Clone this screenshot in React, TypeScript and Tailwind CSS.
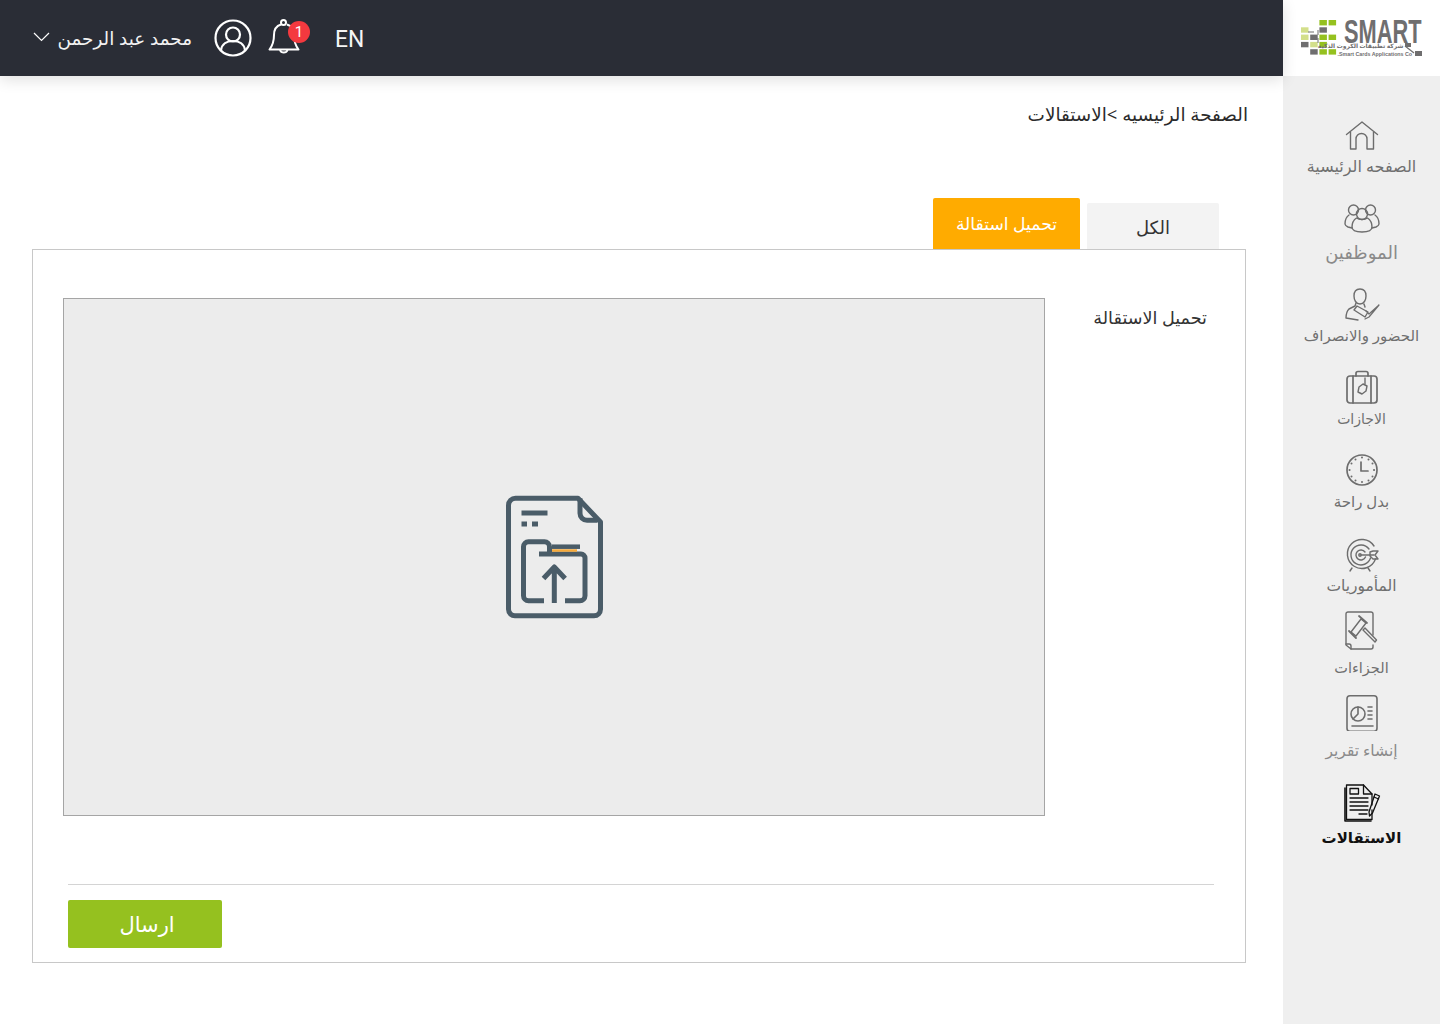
import React from "react";

const Ic = ({ children, w = 36, h = 36, sw = 1.4, c = "#6d6d6d" }: { children: React.ReactNode; w?: number; h?: number; sw?: number; c?: string }) => (
  <svg width={w} height={h} viewBox={`0 0 ${w} ${h}`} fill="none" stroke={c} strokeWidth={sw} strokeLinecap="round" strokeLinejoin="round">{children}</svg>
);

const Home = () => (
  <Ic>
    <path d="M2.500 16.500 18 4l15.500 12.500" />
    <path d="M6.500 14v17H12V21a5.500 5.500 0 0 1 11 0v10h6.500V14" />
  </Ic>
);
const Users = () => (
  <Ic>
    <circle cx="9.500" cy="9" r="5" />
    <circle cx="26.500" cy="9" r="5" />
    <circle cx="18" cy="13" r="5.500" />
    <path d="M5 14c-3 2-4 5-4 9 0 1.500 1 2 3 3l4 1" />
    <path d="M31 14c3 2 4 5 4 9 0 1.500-1 2-3 3l-4 1" />
    <path d="M12.500 17c-3 2-4.500 5-4.500 9 0 3 4 5 10 5s10-2 10-5c0-4-1.500-7-4.500-9-3 2-8 2-11 0z" />
  </Ic>
);
const Attend = () => (
  <Ic>
    <path d="M10 9c0-4 2-7 6-7s6 3 6 7-2 8-6 8-6-4-6-8z" />
    <path d="M12 16l-1 3-6 3c-2 2-3 6-3 9l12 2" />
    <path d="M20 17l1 3" />
    <path d="M10 23l11 7 3-5-11-6z" />
    <path d="M21 32l4-2 10-12-10 9-3-3" strokeWidth="1.200" />
  </Ic>
);
const Bag = () => (
  <Ic>
    <rect x="3" y="7" width="30" height="27" rx="3" strokeWidth="1.700" />
    <path d="M12 7V4.500a2 2 0 0 1 2-2h8a2 2 0 0 1 2 2V7" strokeWidth="1.700" />
    <path d="M9 7v27M27 7v27" strokeWidth="1.700" />
    <path d="M19 15l4 2-1 5-4 3-4-2 1-5z" strokeWidth="1.400" />
    <path d="M21 15V9" strokeWidth="1.400" />
  </Ic>
);
const Clock = () => (
  <Ic>
    <circle cx="18" cy="18" r="15" strokeWidth="1.700" />
    <path d="M17 10v9h7" strokeWidth="1.700" />
    <g strokeWidth="2">
      <path d="M18 5.500v.1M18 30v.1M5.500 18h.1M30 18h.1M11.500 7.500v.1M24.500 7.500v.1M7.500 11.500v.1M28.500 11.500v.1M7.500 24.500v.1M28.500 24.500v.1M11.500 28.500v.1M24.500 28.500v.1" />
    </g>
  </Ic>
);
const Target = () => (
  <Ic>
    <path d="M30 9a14.500 14.500 0 1 0 1.500 13" />
    <path d="M25 12a10 10 0 1 0 1.500 9" />
    <path d="M21 15a5 5 0 1 0 .5 5" />
    <circle cx="16" cy="18" r="1.200" />
    <path d="M16 18h14" />
    <path d="M26 15l3-1h5l-3 4 3 4h-5l-3-3z" />
    <path d="M8 31l-2 3M24 31l2 3" />
  </Ic>
);
const Gavel = () => (
  <Ic w={34} h={40}>
    <path d="M28 24V3a2 2 0 0 0-2-2H3a2 2 0 0 0-2 2v31l5 4h20a2 2 0 0 0 2-2v-2" />
    <path d="M1 33h3a2 2 0 0 1 2 2v3" />
    <path d="M6 21l10-13 5 4-10 13z" />
    <path d="M4 20l7 7M14 5l8 7" strokeWidth="1.800" />
    <path d="M18 19l12 12 1.500-2-11.500-12z" />
  </Ic>
);
const Report = () => (
  <Ic>
    <rect x="3" y="0.800" width="30" height="35.500" rx="3" strokeWidth="1.600" />
    <circle cx="14" cy="19" r="7" strokeWidth="1.600" />
    <path d="M14 12v7l-5 5" strokeWidth="1.600" />
    <path d="M24 12h4M24 16h4M24 20h4M24 24h4M8 31h21" strokeWidth="1.600" />
  </Ic>
);
const Resign = () => (
  <Ic w={38} h={38} c="#111" sw={1.300}>
    <path d="M2 4v33h26" strokeWidth="1.600" />
    <path d="M3.500 35.500V1h17L29 10v11M29 26v9.500H3.500" />
    <path d="M20.500 1v9H29" />
    <rect x="7" y="4.500" width="8.500" height="5.500" />
    <path d="M7 14h18M7 18h18M7 22h18M7 26h18M16 30h8" />
    <path d="M32 10l4.500 2-7 17-3 3-.5-4z" />
    <path d="M31 13l4.500 2" />
  </Ic>
);

const nav: { label: string; icon: React.ReactNode; cls: string; text: string }[] = [
  { label: "الصفحه الرئيسية", icon: <Home />, cls: "h-[36px] mt-[42px]", text: "mt-[2px] text-[16px] text-[#707070]" },
  { label: "الموظفين", icon: <Users />, cls: "h-[36px] mt-[25px]", text: "mt-[5px] text-[18px] text-[#8a8a8a]" },
  { label: "الحضور والانصراف", icon: <Attend />, cls: "h-[36px] mt-[25px]", text: "mt-[2px] text-[15px] text-[#707070]" },
  { label: "الاجازات", icon: <Bag />, cls: "h-[36px] mt-[24px]", text: "mt-[4px] text-[14px] text-[#707070]" },
  { label: "بدل راحة", icon: <Clock />, cls: "h-[36px] mt-[23px]", text: "mt-[3px] text-[15px] text-[#707070]" },
  { label: "المأموريات", icon: <Target />, cls: "h-[36px] mt-[26px]", text: "mt-[2px] text-[15.500px] text-[#707070]" },
  { label: "الجزاءات", icon: <Gavel />, cls: "h-[40px] mt-[16px]", text: "mt-[6px] text-[14.500px] text-[#707070]" },
  { label: "إنشاء تقرير", icon: <Report />, cls: "h-[38px] mt-[17px]", text: "mt-[8px] text-[15.500px] text-[#8a8a8a]" },
  { label: "الاستقالات", icon: <Resign />, cls: "h-[38px] mt-[24px]", text: "mt-[5px] text-[15px] font-bold text-[#111]" },
];

const G = "#95c11f", L = "#d3df8a", D = "#6f6e6f";
const cells: [number, number, string][] = [
  [2, 0, G], [3, 0, G],
  [0, 1, L], [2, 1, D],
  [0, 2, L], [1, 2, D], [2, 2, G], [3, 2, G],
  [0, 3, D], [1, 3, L], [2, 3, G],
  [1, 4, D], [2, 4, G], [3, 4, G],
];

const Logo = () => (
  <div className="relative h-[38px] w-[122px]">
    <svg width="122" height="38" viewBox="0 0 122 38" className="absolute left-0 top-0">
      {cells.map(([x, y, c], i) => (
        <rect key={i} x={x * 9.200} y={y * 7.300} width={7.500} height={5.400} fill={c} />
      ))}
      <path d="M7 12h6M17 10v5M17 18v5" stroke={D} strokeWidth="1" />
      <path d="M104 26l9 7" stroke={D} strokeWidth="1.200" />
      <rect x="104" y="23" width="6" height="4" fill={D} />
      <rect x="114" y="31" width="7" height="5" fill={D} />
    </svg>
    <span className="absolute left-[43px] top-[0px] origin-left scale-x-[0.66] text-[33px] leading-[24px] font-bold text-[#6f6e6f] [font-family:'Liberation_Sans',sans-serif]">SMART</span>
    <span className="absolute right-[19px] top-[23px] text-[6px] leading-[7px] font-bold whitespace-nowrap text-[#6f6e6f]" dir="rtl">شركة تطبيقات الكروت الذكية</span>
    <span className="absolute left-[37px] top-[31px] text-[5.300px] leading-[6px] font-bold whitespace-nowrap text-[#6f6e6f] [font-family:'Liberation_Sans',sans-serif]">Smart Cards Applications Co.</span>
  </div>
);

export default function App() {
  return (
    <div dir="rtl" className="flex h-[1024px] w-[1440px] overflow-hidden bg-white [font-family:'Noto_Sans','DejaVu_Sans',sans-serif]">
      <aside className="flex w-[157px] shrink-0 flex-col bg-[#efefef]">
        <div className="flex h-[76px] shrink-0 items-center justify-center bg-white pt-[1px]">
          <Logo />
        </div>
        {nav.map((n) => (
          <div key={n.label} className="flex flex-col items-center">
            <div className={`flex items-center justify-center ${n.cls}`}>{n.icon}</div>
            <div className={`leading-[20px] whitespace-nowrap ${n.text}`}>{n.label}</div>
          </div>
        ))}
      </aside>

      <div className="flex min-w-0 flex-1 flex-col">
        <header dir="ltr" className="flex h-[76px] shrink-0 items-center bg-[#2a2d36] pl-[33px] text-white shadow-[0_4px_14px_rgba(0,0,0,0.12)]">
          <svg width="17" height="10" viewBox="0 0 17 10" fill="none" stroke="#fff" strokeWidth="1.200" className="mb-[2px]"><path d="M1 1l7.500 7.500L16 1" /></svg>
          <span dir="rtl" className="ml-[8px] w-[134px] text-[18.400px] leading-[24px] whitespace-nowrap text-[#f2f2f2]">محمد عبد الرحمن</span>
          <svg width="38" height="38" viewBox="0 0 38 38" fill="none" stroke="#fff" strokeWidth="2.200" className="ml-[22px]">
            <circle cx="19" cy="19" r="17.500" />
            <circle cx="19" cy="15.500" r="7" />
            <path d="M7 31c1-6 6-9 12-9s11 3 12 9" />
          </svg>
          <div className="relative ml-[16px] h-[38px] w-[41px]">
            <svg width="32" height="38" viewBox="0 0 32 38" fill="none" stroke="#fff" strokeWidth="2" strokeLinejoin="round" className="absolute left-0 top-0">
              <circle cx="15.500" cy="3.500" r="2.500" />
              <path d="M13 5.500C8 7 6 11 6 16c0 6-1 10-4.500 14.500h29C27 26 26 22 26 16c0-5-2-9-7-10.500" />
              <path d="M12 31a4 4 0 0 0 7.500 0" />
            </svg>
            <span className="absolute left-[20px] top-[2px] flex h-[22px] w-[22px] items-center justify-center rounded-full bg-[#f4393f] text-[15px] leading-none text-white [font-family:'Roboto',sans-serif]">1</span>
          </div>
          <span className="mt-[2px] ml-[26px] origin-left scale-x-[0.95] text-[24px] leading-[28px] text-[#f5f5f5] [font-family:'Roboto',sans-serif]">EN</span>
        </header>

        <main className="flex flex-1 flex-col pr-[35px] pl-[37px]">
          <div className="mt-[25px] h-[26px] text-[18.400px] leading-[26px] text-[#2b2b2b]">الصفحة الرئيسيه &gt;الاستقالات</div>

          <div className="mt-[71px] ml-[-1px] flex items-end pr-[29px]">
            <div className="flex h-[46px] w-[132px] items-center justify-center rounded-t-[2px] bg-[#f3f3f3] pt-[3px] text-[18px] text-[#333]">الكل</div>
            <div className="mr-[7px] flex h-[51px] w-[147px] items-center justify-center rounded-t-[2px] bg-[#ffab00] text-[17.200px] text-white">تحميل استقالة</div>
          </div>

          <section className="mr-[2px] flex h-[714px] w-[1214px] flex-col border border-[#c8c8c8] bg-white">
            <div className="flex flex-1 pt-[48px] pb-[68px] pl-[30px]">
              <label className="w-[200px] shrink-0 pt-[7px] pr-[38px] text-[17.600px] leading-[24px] text-[#333]">تحميل الاستقالة</label>
              <div className="flex h-[518px] w-[982px] items-center justify-center border border-[#a5a5a5] bg-[#ececec]">
                <svg width="98" height="124" viewBox="-1 0 98 124" fill="none" stroke="#4a5c68" strokeWidth="5" strokeLinejoin="round">
                  <path d="M72 3.300H9.500a7 7 0 0 0-7 7v104a6.500 6.500 0 0 0 7 6.500H88a6.500 6.500 0 0 0 6.500-6.500V27z" />
                  <path d="M74 3.300v15a7 7 0 0 0 7 7h10" />
                  <path d="M15.500 18h26M15.500 29H21M26 29h6" />
                  <path d="M38 105.700H22.500a5 5 0 0 1-5-5V51.700a5 5 0 0 1 5-5h16a5 5 0 0 1 5 5V59" />
                  <path d="M33 59h42a4 4 0 0 1 4 4v37.700a5 5 0 0 1-5 5H59" />
                  <path d="M46 51.700h28" strokeWidth="4.500" />
                  <path d="M46 55.500h25" stroke="#f5a93a" strokeWidth="2.500" />
                  <path d="M48.300 108V72M37.500 83.500 48.300 72l10.800 11.500" />
                </svg>
              </div>
            </div>
            <div className="mr-[31px] ml-[35px] border-t border-[#d4d4d4] pt-[15px] pb-[14px]" dir="ltr">
              <button className="flex h-[48px] w-[154px] items-center justify-center rounded-[2px] bg-[#95c11f] pl-[4px] text-[21px] leading-none text-white">ارسال</button>
            </div>
          </section>
        </main>
      </div>
    </div>
  );
}
